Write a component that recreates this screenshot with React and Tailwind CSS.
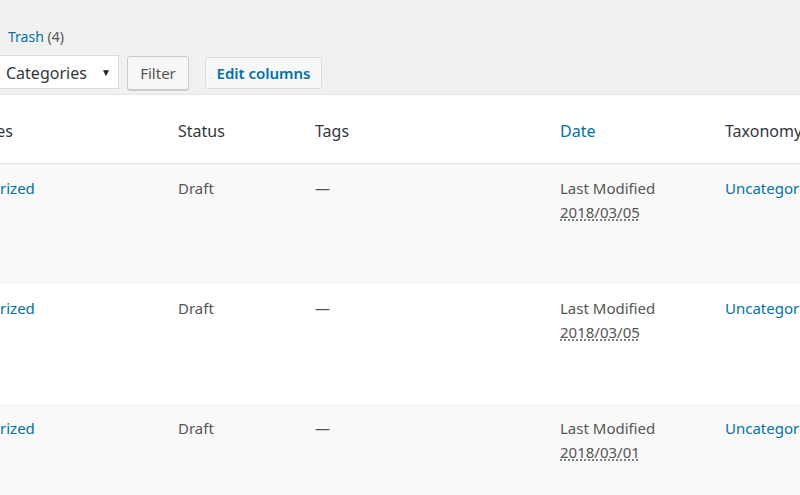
const rows = [
  { bg: 'bg-[#f9f9f9]', date: '2018/03/05' },
  { bg: 'bg-white', date: '2018/03/05' },
  { bg: 'bg-[#f9f9f9]', date: '2018/03/01' },
]

const cols = 'grid grid-cols-[253px_137px_245px_165px_1fr]'

export default function App() {
  return (
    <div
      className="w-[800px] h-[495px] overflow-hidden bg-[#f1f1f1] text-[#555]"
      style={{ fontFamily: '"Segoe UI", "Noto Sans", "Open Sans", sans-serif' }}
    >
      <div className="h-[95px] border-b border-[#e5e5e5]">
        <div className="pt-[26px] pl-[8px] text-[14px] leading-[22px]">
          <a className="text-[#0073aa]">Trash</a> <span className="text-[#555]">(4)</span>
        </div>
        <div className="mt-[7px] flex items-start">
          <div className="-ml-[4px] w-[123px] h-[34px] bg-white border border-[#ddd] flex items-center justify-between pl-[9px] pr-[7px] text-[16px] text-[#32373c]">
            <span className="pt-[1px]">Categories</span>
            <span className="text-[10px] text-[#222]">▼</span>
          </div>
          <button className="ml-[8px] mt-[1px] w-[62px] h-[34px] bg-[#f7f7f7] border border-[#ccc] rounded-[3px] shadow-[0_1px_0_#ccc] text-[15px] text-[#555]">
            Filter
          </button>
          <button className="ml-[16px] mt-[2px] w-[117px] h-[32px] bg-[#f7f7f7] border border-[#ddd] rounded-[3px] text-[15px] font-semibold text-[#0073aa]">
            Edit columns
          </button>
        </div>
      </div>

      <div className="bg-white -ml-[75px]">
        <div className={`${cols} h-[69px] items-center border-b border-[#e1e1e1] text-[16px] text-[#32373c]`}>
          <div className="pl-[7px] pt-[3px]">Categories</div>
          <div className="pt-[3px]">Status</div>
          <div className="pt-[3px]">Tags</div>
          <div className="pt-[3px] text-[#0073aa]">Date</div>
          <div className="pt-[3px] whitespace-nowrap">Taxonomy</div>
        </div>
        {rows.map((r, i) => (
          <div key={i} className={`${cols} ${r.bg} h-[120px] pt-[12px] text-[15px] leading-[24px]`}>
            <div className="pl-[7px] text-[#0073aa]">Uncategorized</div>
            <div>Draft</div>
            <div>—</div>
            <div>
              <div>Last Modified</div>
              <abbr className="no-underline">
                <span className="underline decoration-dotted underline-offset-[2px] decoration-[#555]">{r.date}</span>
              </abbr>
            </div>
            <div className="text-[#0073aa] whitespace-nowrap">Uncategorized</div>
          </div>
        ))}
      </div>
    </div>
  )
}
